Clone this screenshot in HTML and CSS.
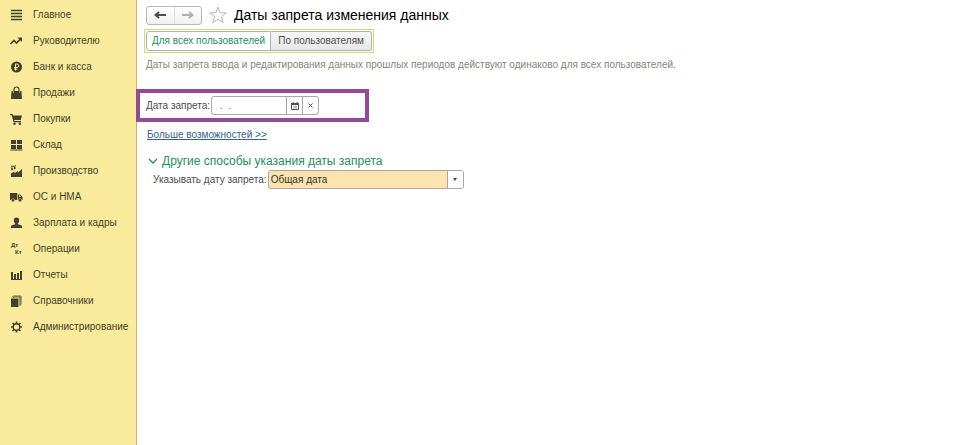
FILE: index.html
```
<!DOCTYPE html>
<html lang="ru">
<head>
    <meta charset="UTF-8">
    <meta name="viewport" content="width=device-width, initial-scale=1.0">
    <title>Даты запрета изменения данных</title>
    <link rel="stylesheet" href="styles.css">
</head>
<body>
    <div class="app">
        <nav class="sidebar">
            <a href="#" class="menu-item">
                <svg class="menu-icon" viewBox="0 0 12 12"><path d="M1 1.500h11M1 4.500h11M1 7.500h11M1 10.500h11" fill="none" stroke="currentColor" stroke-width="1.400"/></svg>
                Главное
            </a>
            <a href="#" class="menu-item">
                <svg class="menu-icon" viewBox="0 0 12 12"><path d="M.5 9l3.500-3.500 2.500 2.500L10.500 4" fill="none" stroke="currentColor" stroke-width="1.700"/><path d="M7.500 2.500H12V7z" fill="currentColor"/></svg>
                Руководителю
            </a>
            <a href="#" class="menu-item">
                <svg class="menu-icon" viewBox="0 0 12 12"><circle cx="6.500" cy="6" r="5.500" fill="currentColor"/><path d="M5.500 9.500V3H7a1.700 1.700 0 0 1 0 3.400H4M4 8h3.500" fill="none" stroke="#f9eb9b" stroke-width="1"/></svg>
                Банк и касса
            </a>
            <a href="#" class="menu-item">
                <svg class="menu-icon" viewBox="0 0 12 12"><path d="M1.500 4h10l.5 8H1z" fill="currentColor"/><path d="M4 5V2.500a2.500 2.500 0 0 1 5 0V5" fill="none" stroke="currentColor" stroke-width="1.200"/><path d="M3.300 4v2M9.700 4v2" stroke="#f9eb9b" stroke-width=".6"/></svg>
                Продажи
            </a>
            <a href="#" class="menu-item">
                <svg class="menu-icon" viewBox="0 0 12 12"><path d="M0 1h2.500l.5 1.500h9L10.700 7H4.200l.3 1H11v1.200H3.500L1.700 2.200H0z" fill="currentColor"/><circle cx="4.500" cy="10.800" r="1.200" fill="currentColor"/><circle cx="9.800" cy="10.800" r="1.200" fill="currentColor"/></svg>
                Покупки
            </a>
            <a href="#" class="menu-item">
                <svg class="menu-icon" viewBox="0 0 12 12"><path d="M1 1h5v4H1zM7 1h5v4H7zM1 6h5v4H1zM7 6h5v4H7zM.5 10.500h12v1H.5z" fill="currentColor"/></svg>
                Склад
            </a>
            <a href="#" class="menu-item">
                <svg class="menu-icon" viewBox="0 0 12 12"><path d="M1 12V8.500L4.500 6.500v1.700L8 6v1.700L12 4v8zM1.500 5.500L1 2.500h1.700L3 5zM4 4.500L3.700 2h1.800v2z" fill="currentColor"/><path d="M1 1.500c1-1 2 .5 5-.7" fill="none" stroke="currentColor" stroke-width="1"/></svg>
                Производство
            </a>
            <a href="#" class="menu-item">
                <svg class="menu-icon" viewBox="0 0 12 12"><path d="M0 2h7.300v7H0zM8 3.500h2.300L12.500 6v3H8z" fill="currentColor"/><path d="M9 4.300h1l1 1.400H9z" fill="#f9eb9b"/><circle cx="3" cy="9.300" r="1.600" fill="currentColor" stroke="#f9eb9b" stroke-width=".5"/><circle cx="10" cy="9.300" r="1.600" fill="currentColor" stroke="#f9eb9b" stroke-width=".5"/></svg>
                ОС и НМА
            </a>
            <a href="#" class="menu-item">
                <svg class="menu-icon" viewBox="0 0 12 12"><path d="M6.500.5a2.700 2.700 0 0 1 2.700 2.700C9.200 4.800 8.500 6 7.900 6.400v.8l3.100 1c.9.300 1.200 1.200 1.200 2.800H.8c0-1.600.3-2.500 1.200-2.800l3.100-1v-.8C4.500 6 3.800 4.800 3.800 3.200A2.700 2.700 0 0 1 6.500.5z" fill="currentColor"/></svg>
                Зарплата и кадры
            </a>
            <a href="#" class="menu-item">
                <svg class="menu-icon" viewBox="0 0 12 12"><text x="1" y="4" class="icon-text">Дт</text><text x="5" y="11" class="icon-text">Кт</text></svg>
                Операции
            </a>
            <a href="#" class="menu-item">
                <svg class="menu-icon" viewBox="0 0 12 12"><path d="M1 3h2v7H1zM4 5h2v5H4zM7 4h2v6H7zM10 2h2v8h-2zM1 10h11v1H1z" fill="currentColor"/></svg>
                Отчеты
            </a>
            <a href="#" class="menu-item">
                <svg class="menu-icon" viewBox="0 0 12 12"><path d="M1 3.500h7.500V12H1z" fill="currentColor"/><path d="M2 2.500L3.500 1H11v8.500L9.500 11M3 3l1-1h6v8" fill="none" stroke="currentColor" stroke-width=".8"/></svg>
                Справочники
            </a>
            <a href="#" class="menu-item">
                <svg class="menu-icon" viewBox="0 0 12 12"><circle cx="6.500" cy="6" r="3.300" fill="none" stroke="currentColor" stroke-width="1.400"/><path d="M6.500 .5v2M6.500 9.500v2M1 6h2M10 6h2M2.600 2.100l1.400 1.400M9 8.500l1.400 1.400M2.600 9.900L4 8.500M9 3.500l1.400-1.400" stroke="currentColor" stroke-width="1.600"/></svg>
                Администрирование
            </a>
        </nav>

        <main class="content">
            <header class="title-bar">
                <div class="history">
                    <button class="history-button" aria-label="Назад"><svg class="arrow" viewBox="0 0 12 8"><path d="M1 4h11M5 1L1.500 4 5 7" fill="none" stroke="currentColor" stroke-width="2"/></svg></button>
                    <button class="history-button forward" aria-label="Вперед"><svg class="arrow" viewBox="0 0 12 8"><path d="M0 4h11M7 1l3.500 3L7 7" fill="none" stroke="currentColor" stroke-width="2"/></svg></button>
                </div>
                <button class="favorite" aria-label="В избранное"><svg class="star" viewBox="0 0 18 18"><path d="M9 1l2.100 5.700 6.100.2-4.800 3.800 1.700 5.900L9 13.200l-5.100 3.400 1.700-5.900L.8 6.900l6.100-.2z" fill="#fff" stroke="#b5b5b5" stroke-width="1"/></svg></button>
                <h1 class="title">Даты запрета изменения данных</h1>
            </header>

            <div class="tabs">
                <button class="tab active">Для всех пользователей</button>
                <button class="tab">По пользователям</button>
            </div>

            <p class="note">Даты запрета ввода и редактирования данных прошлых периодов действуют одинаково для всех пользователей.</p>

            <div class="date-row">
                <label for="ban-date">Дата запрета:</label>
                <div class="field">
                    <input type="text" id="ban-date" class="date-input" placeholder=".  .">
                    <button class="field-button" aria-label="Выбрать дату"><svg class="calendar" viewBox="0 0 8 8"><path d="M.5 1.500h7v6h-7z" fill="none" stroke="currentColor"/><path d="M0 1h8v2H0zM1.500 0h1v2h-1zM5.500 0h1v2h-1z" fill="currentColor"/><path d="M2 4.500h4M2 6h4" stroke="currentColor" stroke-width=".5"/></svg></button>
                    <button class="field-button" aria-label="Очистить"><svg class="clear" viewBox="0 0 5 5"><path d="M.5.5l4 4M4.500.5l-4 4" stroke="currentColor" stroke-width="1"/></svg></button>
                </div>
            </div>

            <a href="#" class="more">Больше возможностей &gt;&gt;</a>

            <section class="methods">
                <h2 class="methods-title">
                    <svg class="chevron" viewBox="0 0 10 6"><path d="M1 1l4 4 4-4" fill="none" stroke="currentColor" stroke-width="1.300"/></svg>
                    Другие способы указания даты запрета
                </h2>
                <div class="method-row">
                    <label for="method">Указывать дату запрета:</label>
                    <div class="select-box">
                        <select id="method" class="method-select">
                            <option>Общая дата</option>
                        </select>
                        <span class="select-arrow"></span>
                    </div>
                </div>
            </section>
        </main>
    </div>
</body>
</html>
```

FILE: styles.css
```
* {
    box-sizing: border-box;
}
body {
    margin: 0;
    font-family: "Liberation Sans", Arial, sans-serif;
    font-size: 10px;
    line-height: 12px;
    color: #4d4d4d;
    background: #fff;
}
button, input, select {
    margin: 0;
    padding: 0;
    border: none;
    background: none;
    font: inherit;
    color: inherit;
}
svg {
    display: block;
}
.app {
    display: flex;
    min-height: 100vh;
}

/* left menu */
.sidebar {
    flex: none;
    width: 137px;
    padding-top: 2px;
    background: #f9eb9b;
    border-right: 1px solid #c8bb62;
}
.menu-item {
    display: flex;
    align-items: center;
    gap: 11px;
    height: 26px;
    padding-left: 10px;
    color: #443f2c;
    text-decoration: none;
    white-space: nowrap;
}
.menu-icon {
    width: 12px;
    height: 12px;
    overflow: visible;
}
.icon-text {
    font-size: 6px;
    font-weight: bold;
    fill: currentColor;
}

.content {
    flex: 1;
    min-width: 0;
    padding: 5px 9px;
}
.title-bar {
    display: flex;
    align-items: center;
    height: 20px;
}
.history {
    display: flex;
    width: 56px;
    height: 19px;
    border: 1px solid #b8b8b8;
    border-radius: 3px;
    background: linear-gradient(#fff, #f0f0f0);
}
.history-button {
    display: flex;
    flex: 1;
    align-items: center;
    justify-content: center;
}
.forward {
    color: #b0b0b0;
    border-left: 1px solid #ddd;
}
.arrow {
    width: 12px;
    height: 8px;
}
.favorite {
    margin: 0 7px;
}
.star {
    width: 18px;
    height: 18px;
}
.title {
    margin: 0;
    font-size: 14px;
    font-weight: normal;
    line-height: 20px;
    color: #000;
}

.tabs {
    display: flex;
    width: fit-content;
    margin: 4px 0 0 -2px;
    padding: 1px;
    border: 1px solid #d6d878;
}
.tab {
    height: 20px;
    padding: 0 7px;
    border: 1px solid #b0b0b0;
    border-left: none;
    border-radius: 0 3px 3px 0;
    background: linear-gradient(#f7f7f7, #e6e6e6);
}
.tab.active {
    padding: 0 5px;
    border-left: 1px solid #b0b0b0;
    border-radius: 3px 0 0 3px;
    background: #fff;
    color: #23905a;
}
.note {
    margin: 6px 0 18px;
    color: #85857a;
}

/* highlighted date field */
.date-row {
    display: flex;
    align-items: center;
    gap: 1px;
    width: 233px;
    height: 33px;
    margin-left: -10px;
    padding-left: 6px;
    border: 4px solid #934a97;
}
.field {
    display: flex;
    height: 19px;
    border: 1px solid #a8a8a8;
    border-radius: 3px;
}
.date-input {
    width: 74px;
    padding-left: 8px;
}
.date-input::placeholder {
    color: #777;
    opacity: 1;
    white-space: pre;
}
.field-button {
    display: flex;
    align-items: center;
    justify-content: center;
    width: 16px;
    border-left: 1px solid #a8a8a8;
}
.calendar {
    width: 8px;
    height: 8px;
}
.clear {
    width: 5px;
    height: 5px;
}

.more {
    display: inline-block;
    margin: 7px 0 0 1px;
    color: #34618c;
}
.methods {
    margin-top: 12px;
}
.methods-title {
    display: flex;
    align-items: center;
    gap: 4px;
    margin: 0;
    padding-left: 2px;
    font-size: 12px;
    font-weight: normal;
    line-height: 16px;
    color: #23905a;
}
.chevron {
    width: 10px;
    height: 6px;
}
.method-row {
    display: flex;
    align-items: center;
    gap: 1px;
    margin-top: 1px;
    padding-left: 7px;
}
.select-box {
    position: relative;
    width: 196px;
}
.method-select {
    display: block;
    width: 100%;
    height: 19px;
    padding-left: 2px;
    border: 1px solid #a8a8a8;
    border-radius: 3px;
    background: #fde3ae;
    color: #333;
    appearance: none;
}
.select-arrow {
    position: absolute;
    top: 1px;
    right: 1px;
    bottom: 1px;
    display: flex;
    align-items: center;
    justify-content: center;
    width: 16px;
    border-left: 1px solid #a8a8a8;
    border-radius: 0 2px 2px 0;
    background: #fff;
    pointer-events: none;
}
.select-arrow::after {
    content: "";
    border: 2px solid transparent;
    border-top: 3px solid #444;
    border-bottom: none;
}
```
